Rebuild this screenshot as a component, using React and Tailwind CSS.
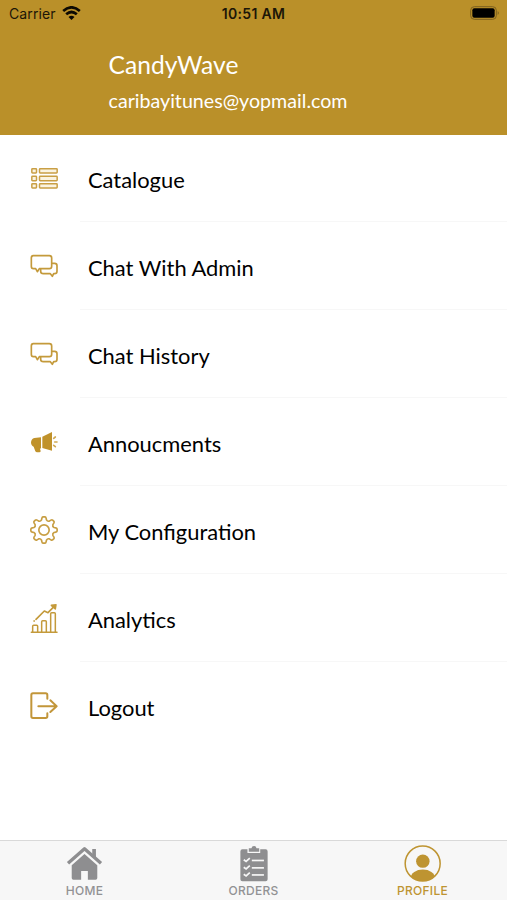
import React from "react";

const GOLD = "#be9431";

const CatalogueIcon = () => (
  <svg viewBox="0 -6 150 150" className="w-[50px] h-[50px]" fill="#fbf4e2" stroke="#c99f45" strokeWidth="4.5">
    {[41, 64, 86].map((y) => (
      <g key={y}>
        <rect x="35.5" y={y} width="14" height="13" rx="2" />
        <rect x="58.5" y={y} width="53" height="13" rx="2" />
      </g>
    ))}
  </svg>
);

const ChatIcon = () => (
  <svg
    viewBox="0 3 150 150"
    className="w-[50px] h-[50px]"
    fill="none"
    stroke="#c49a3b"
    strokeWidth="5"
    strokeLinejoin="round"
    strokeLinecap="round"
  >
    <path d="M40 47H88Q95 47 95 54V79Q95 86 88 86H58L52 95L47 86H40Q34 86 34 79V54Q34 47 40 47Z" />
    <path d="M97 70H104Q111 70 111 77V94Q111 101 104 101H101L97 109L91 101H70Q62 101 62 94V88" />
  </svg>
);

const MegaphoneIcon = () => (
  <svg viewBox="0 -9 150 150" className="w-[50px] h-[50px]" fill="#c0922b">
    <path d="M63 52V85L60 86L62 93Q62 97 58 97H51Q48 97 46 94L41 80Q33 77 33 67Q34 56 43 54Z" />
    <path d="M67 50L96 36V92L67 84Z" />
    <g stroke="#cfa954" strokeWidth="5" strokeLinecap="round">
      <path d="M101 55L106 51" />
      <path d="M104 66H111" />
      <path d="M101 76L106 80" />
    </g>
  </svg>
);

// eight rounded teeth around the centre point
const gearPoints = () => {
  const parts = [];
  for (let i = 0; i < 8; i++) {
    const at = (deg, r) => {
      const a = ((i * 45 - 90 + deg) * Math.PI) / 180;
      return `${(72 + r * Math.cos(a)).toFixed(1)} ${(75 + r * Math.sin(a)).toFixed(1)}`;
    };
    parts.push(
      `${i ? "L" : "M"}${at(-14, 31)}L${at(-10, 36)}Q${at(-8, 39.5)} ${at(-4, 39.5)}L${at(4, 39.5)}Q${at(8, 39.5)} ${at(10, 36)}L${at(14, 31)}Q${at(22.5, 27)} ${at(31, 31)}`
    );
  }
  return parts.join("") + "Z";
};

const GearIcon = () => (
  <svg viewBox="0 0 150 150" className="w-[50px] h-[50px]" fill="none" stroke="#c79e42" strokeWidth="5" strokeLinejoin="round">
    <path d={gearPoints()} />
    <circle cx="72" cy="75" r="15.5" />
  </svg>
);

const AnalyticsIcon = () => (
  <svg
    viewBox="0 0 150 150"
    className="w-[50px] h-[50px]"
    fill="none"
    stroke="#c49a3b"
    strokeWidth="4.5"
    strokeLinejoin="round"
    strokeLinecap="round"
  >
    <path d="M34 118H111" />
    <path d="M38 117V100Q38 97 41 97H50Q53 97 53 100V117" />
    <path d="M65 117V86Q65 83 68 83H76Q79 83 79 86V117" />
    <path d="M92 117V62Q92 59 95 59H103Q106 59 106 62V117" />
    <path d="M48 79L73 54L84 59L102 41" strokeWidth="5" />
    <path d="M94 37L108 35L106 48Z" fill="#c49a3b" />
    <circle cx="42" cy="84" r="1" strokeWidth="3" />
  </svg>
);

const LogoutIcon = () => (
  <svg
    viewBox="0 -3 150 150"
    className="w-[50px] h-[50px]"
    fill="none"
    stroke="#c2963a"
    strokeWidth="6"
    strokeLinejoin="round"
    strokeLinecap="round"
  >
    <path d="M82 50V39Q82 34 77 34H39Q34 34 34 39V103Q34 108 39 108H77Q82 108 82 103V94" />
    <path d="M55 72.5H110M91 55L110 72.5L91 90" />
  </svg>
);

const HomeIcon = () => (
  <svg viewBox="50 30 110 110" className="w-[37px] h-[37px]" fill="#8e8e90">
    <path d="M128 42H139V68L128 58Z" />
    <path d="M56 84L105 41L154 84" fill="none" stroke="#8e8e90" strokeWidth="10" strokeLinejoin="round" />
    <path d="M105 57L143 90V128Q143 133 138 133H115V107H95V133H72Q67 133 67 128V90Z" />
  </svg>
);

const OrdersIcon = () => (
  <svg viewBox="61 30 110 110" className="w-[37px] h-[37px]" fill="#8e8e90">
    <path d="M83 43H98V54H136V43H152Q158 43 158 49V132Q158 138 152 138H83Q77 138 77 132V49Q77 43 83 43Z" />
    <path d="M102 40H110Q111 33 117.5 33Q124 33 125 40H133V50H102Z" />
    <g fill="none" stroke="#f7f7f7" strokeWidth="5">
      {[75, 97, 118].map((y) => (
        <g key={y}>
          <path d={`M87 ${y - 1}L94 ${y + 4}L105 ${y - 6}`} />
          <path d={`M111 ${y + 1}H147`} />
        </g>
      ))}
    </g>
  </svg>
);

const ProfileIcon = () => (
  <svg viewBox="56 29 110 110" className="w-[37px] h-[37px]" fill={GOLD}>
    <clipPath id="avatar">
      <circle cx="111.5" cy="84" r="52" />
    </clipPath>
    <circle cx="111.5" cy="84" r="52" fill="none" stroke={GOLD} strokeWidth="4.5" />
    <circle cx="112" cy="77" r="20" />
    <ellipse cx="112" cy="127" rx="36" ry="25" clipPath="url(#avatar)" />
  </svg>
);

const MENU = [
  { label: "Catalogue", Icon: CatalogueIcon },
  { label: "Chat With Admin", Icon: ChatIcon },
  { label: "Chat History", Icon: ChatIcon },
  { label: "Annoucments", Icon: MegaphoneIcon },
  { label: "My Configuration", Icon: GearIcon },
  { label: "Analytics", Icon: AnalyticsIcon },
  { label: "Logout", Icon: LogoutIcon },
];

const TABS = [
  { label: "HOME", Icon: HomeIcon },
  { label: "ORDERS", Icon: OrdersIcon },
  { label: "PROFILE", Icon: ProfileIcon, active: true },
];

const StatusBar = () => (
  <div className="grid grid-cols-3 items-center h-[26px] pl-[9px] pr-[7px] text-[#1c1607] font-['Inter',sans-serif]">
    <div className="flex items-center gap-[6px] text-[14px] tracking-[0.1px]">
      Carrier
      <svg viewBox="0 0 56 42" className="w-[19px] h-[14px] -mt-px" fill="none" stroke="#0d0a03" strokeWidth="8">
        <path d="M3 15Q28 -7 53 15" />
        <path d="M12 25Q28 11 44 25" />
        <path d="M19 33Q28 25 37 33L28 42Z" fill="#0d0a03" stroke="none" />
      </svg>
    </div>
    <div className="text-center text-[14px] tracking-[0.3px] font-semibold whitespace-nowrap -ml-[2px]">10:51 AM</div>
    <svg viewBox="0 0 90 42" className="justify-self-end w-[30px] h-[14px]">
      <rect x="2" y="2" width="77" height="38" rx="11" fill="none" stroke="#7d611f" strokeWidth="3" />
      <rect x="7" y="7" width="67" height="28" rx="6" fill="#000" />
      <path d="M83 15Q90 21 83 27Z" fill="#7d611f" />
    </svg>
  </div>
);

export default function App() {
  return (
    <div className="flex flex-col w-full h-[900px] bg-white overflow-hidden font-['Lato',sans-serif]">
      <header className="h-[135px] shrink-0 bg-[#ba9029]">
        <StatusBar />
        <div className="pl-[108.5px] pt-[22px] text-white">
          <h1 className="text-[24.6px] leading-[34px]">CandyWave</h1>
          <p className="text-[19.65px] leading-[26px] mt-[6px]">caribayitunes@yopmail.com</p>
        </div>
      </header>

      <ul className="flex-1 -mt-px">
        {MENU.map(({ label, Icon }, i) => (
          <li key={label} className="flex items-center h-[88px] pl-5">
            <Icon />
            <div
              className={`flex items-center flex-1 h-full ml-[10px] pl-2 pt-1.5 border-b text-[21.9px] text-black ${
                i < MENU.length - 1 ? "border-[#f7f7f7]" : "border-transparent"
              }`}
            >
              {label}
            </div>
          </li>
        ))}
      </ul>

      <nav className="grid grid-cols-3 h-[60px] shrink-0 bg-[#f7f7f7] border-t border-[#d9d9d9]">
        {TABS.map(({ label, Icon, active }) => (
          <div key={label} className="flex flex-col items-center pt-1">
            <Icon />
            <span
              className={`font-['Inter',sans-serif] text-[12px] leading-[16px] mt-[1px] font-medium tracking-[0.3px] ${
                active ? "text-[#be9431]" : "text-[#929294]"
              }`}
            >
              {label}
            </span>
          </div>
        ))}
      </nav>
    </div>
  );
}
